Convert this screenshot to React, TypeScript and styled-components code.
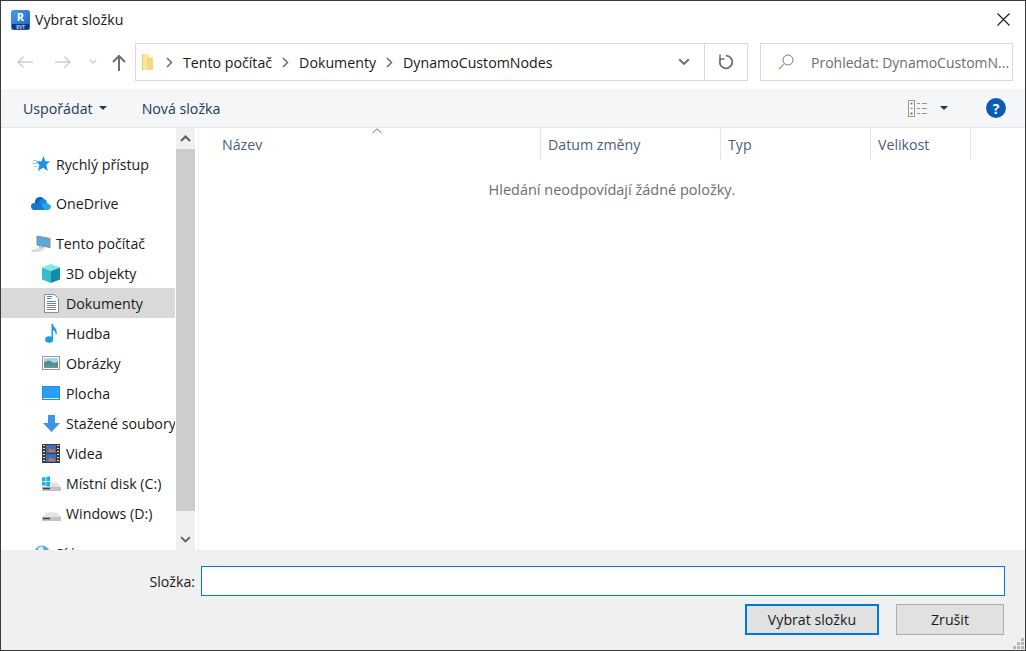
import React from 'react';
import styled, { createGlobalStyle } from 'styled-components';

const GlobalStyle = createGlobalStyle`
  html, body {
    margin: 0;
    padding: 0;
    background: #fff;
  }
  body {
    font-family: 'Open Sans', 'Noto Sans', sans-serif;
    font-size: 14.2px;
    color: #1a1a1a;
  }
  * {
    box-sizing: border-box;
  }
`;

const WindowDiv = styled.div`
  display: flex;
  flex-direction: column;
  width: 1026px;
  height: 651px;
  overflow: hidden;
  background: #fff;
  border: 1px solid #3a3a3a;
`;

const TitleBarDiv = styled.div`
  display: flex;
  align-items: center;
  flex: none;
  height: 37px;
  padding: 0 15px 0 10px;
`;

const TitleP = styled.p`
  flex: 1;
  margin: 0 0 0 5px;
`;

const NavBarDiv = styled.div`
  display: flex;
  align-items: center;
  flex: none;
  height: 51px;
  padding: 0 12px 3px 5px;
`;

const NavButton = styled.div<{ $width: number }>`
  display: flex;
  align-items: center;
  justify-content: center;
  flex: none;
  width: ${(p) => p.$width}px;
  height: 38px;
`;

const AddressDiv = styled.div`
  display: flex;
  align-items: center;
  flex: none;
  width: 613px;
  height: 38px;
  margin: 0 12px 0 1px;
  padding-left: 5px;
  border: 1px solid #d9d9d9;
`;

const CrumbsDiv = styled.div`
  display: flex;
  align-items: center;
  flex: 1;
`;

const CrumbFolderSpan = styled.span`
  display: flex;
  margin-right: 2px;
`;

const CrumbSep = styled.span`
  display: flex;
  justify-content: center;
  width: 27px;
`;

const AddressEndDiv = styled.div<{ $width: number; $divider?: boolean }>`
  display: flex;
  align-items: center;
  justify-content: center;
  flex: none;
  width: ${(p) => p.$width}px;
  height: 100%;
  border-left: ${(p) => (p.$divider ? '1px solid #d9d9d9' : 'none')};
`;

const SearchDiv = styled.div`
  display: flex;
  align-items: center;
  flex: 1;
  height: 38px;
  padding-left: 17px;
  border: 1px solid #d9d9d9;
  font-size: 14px;
  color: #6d6d6d;
  white-space: nowrap;
  overflow: hidden;
`;

const SearchTextSpan = styled.span`
  margin-left: 17px;
`;

const CommandBarDiv = styled.div`
  display: flex;
  align-items: center;
  flex: none;
  height: 39px;
  padding: 0 19px 0 22px;
  background: #f5f6f7;
  border-bottom: 1px solid #e6e6e6;
  color: #1e395b;
`;

const CommandSpan = styled.span`
  display: flex;
  align-items: center;
`;

const NewFolderSpan = styled(CommandSpan)`
  flex: 1;
  margin-left: 35px;
`;

const CaretI = styled.i`
  display: block;
  width: 0;
  height: 0;
  border-left: 4px solid transparent;
  border-right: 4px solid transparent;
  border-top: 4px solid #1e395b;
`;

const UseCaretI = styled(CaretI)`
  margin-left: 6px;
`;

const ViewCaretI = styled(CaretI)`
  margin: 0 38px 0 12px;
`;

const HelpBadge = styled.span`
  display: flex;
  align-items: center;
  justify-content: center;
  width: 20px;
  height: 20px;
  border-radius: 50%;
  background: #0a5cb0;
  color: #fff;
  font-size: 14px;
  font-weight: 700;
`;

const MainDiv = styled.div`
  display: flex;
  flex: 1;
  min-height: 0;
`;

const SidebarDiv = styled.div`
  flex: none;
  width: 174px;
  margin-right: 1px;
  overflow: hidden;
  padding-top: 21px;
`;

const NavRow = styled.div<{ $indent: number; $active?: boolean; $gap?: number }>`
  display: flex;
  align-items: center;
  height: 30px;
  margin-bottom: ${(p) => p.$gap ?? 0}px;
  padding-left: ${(p) => p.$indent}px;
  background: ${(p) => (p.$active ? '#d9d9d9' : 'transparent')};
  white-space: nowrap;
`;

const NavIconSpan = styled.span`
  display: flex;
  align-items: center;
  justify-content: center;
  flex: none;
  width: 22px;
  height: 22px;
  margin-right: 4px;
`;

const ScrollbarDiv = styled.div`
  display: flex;
  flex-direction: column;
  flex: none;
  width: 19px;
  background: #f0f0f0;
`;

const ScrollButton = styled.div`
  display: flex;
  align-items: center;
  justify-content: center;
  flex: none;
  height: 21px;
`;

const ScrollThumb = styled.div`
  flex: none;
  height: 362px;
  background: #cdcdcd;
`;

const ScrollTrack = styled.div`
  flex: 1;
`;

const ContentDiv = styled.div`
  position: relative;
  flex: 1;
  margin-left: 3px;
  border-left: 1px solid #f0f0f0;
`;

const ColumnsDiv = styled.div`
  display: flex;
  height: 32px;
`;

const ColumnDiv = styled.div<{ $width: number }>`
  display: flex;
  align-items: center;
  flex: none;
  width: ${(p) => p.$width}px;
  padding-left: 7px;
  border-right: 1px solid #e5e5e5;
  color: #4c607a;
`;

const NameColumnDiv = styled(ColumnDiv)`
  padding-left: 23px;
`;

const SortMark = styled.svg`
  position: absolute;
  top: 0;
  left: 173px;
`;

const EmptyP = styled.p`
  margin: 20px 0 0;
  text-align: center;
  font-size: 14.5px;
  color: #6d6d6d;
`;

const FooterDiv = styled.div`
  position: relative;
  display: flex;
  flex-direction: column;
  flex: none;
  height: 100px;
  padding: 16px 20px 0 0;
  background: #f0f0f0;
`;

const FolderRowDiv = styled.div`
  display: flex;
  align-items: center;
`;

const FolderLabel = styled.label`
  flex: none;
  width: 194px;
  margin-right: 6px;
  text-align: right;
`;

const FolderInput = styled.input`
  flex: 1;
  height: 30px;
  padding: 0 4px;
  background: #fff;
  border: 1px solid #0078d7;
  border-radius: 0;
  outline: none;
`;

const ButtonRowDiv = styled.div`
  display: flex;
  justify-content: flex-end;
  gap: 17px;
  margin-top: 8px;
  padding-right: 1px;
`;

const DialogButton = styled.button<{ $primary?: boolean; $width: number }>`
  width: ${(p) => p.$width}px;
  height: 31px;
  padding: 0;
  background: #e1e1e1;
  border: ${(p) => (p.$primary ? '2px solid #0078d7' : '1px solid #adadad')};
  border-radius: 0;
  font-family: inherit;
  font-size: inherit;
  color: #1a1a1a;
`;

const GripSvg = styled.svg`
  position: absolute;
  right: 1px;
  bottom: 1px;
`;

const RevitIcon = () => (
  <svg width="19" height="20" viewBox="0 0 19 20">
    <defs>
      <linearGradient id="revit" x1="0" y1="0" x2="1" y2="1">
        <stop offset="0" stopColor="#4a9bea" />
        <stop offset="1" stopColor="#1a63c4" />
      </linearGradient>
    </defs>
    <rect x="0" y="0" width="19" height="20" rx="2.5" fill="url(#revit)" />
    <path d="M1 14h17v3.500a2 2 0 0 1-2 2H3a2 2 0 0 1-2-2z" fill="#0c3a82" />
    <text x="9.500" y="11" textAnchor="middle" fontFamily="'Open Sans', sans-serif" fontSize="11" fontWeight="700" fill="#fff">
      R
    </text>
    <text x="9.500" y="19" textAnchor="middle" fontFamily="'Open Sans', sans-serif" fontSize="4.500" fontWeight="700" fill="#c6d6ef">
      RVT
    </text>
  </svg>
);

const ArrowLeft = ({ color }: { color: string }) => (
  <svg width="18" height="14" viewBox="0 0 18 14" fill="none" stroke={color} strokeWidth="1.500">
    <path d="M17 7H2M7.500 1.500 2 7l5.500 5.500" />
  </svg>
);

const ArrowRight = ({ color }: { color: string }) => (
  <svg width="18" height="14" viewBox="0 0 18 14" fill="none" stroke={color} strokeWidth="1.500">
    <path d="M1 7h15M10.500 1.500 16 7l-5.500 5.500" />
  </svg>
);

const ArrowUp = () => (
  <svg width="14" height="17" viewBox="0 0 14 17" fill="none" stroke="#6d6d6d" strokeWidth="2">
    <path d="M7 17V2M1 8l6-6 6 6" />
  </svg>
);

const ChevronDown = ({ color, size = 10 }: { color: string; size?: number }) => (
  <svg width={size} height={size * 0.7} viewBox="0 0 10 7" fill="none" stroke={color} strokeWidth="1.600">
    <path d="M1 1l4 4 4-4" />
  </svg>
);

const ChevronRight = () => (
  <svg width="7" height="11" viewBox="0 0 7 11" fill="none" stroke="#6d6d6d" strokeWidth="1.500">
    <path d="M1 1l4.500 4.500L1 10" />
  </svg>
);

const FolderIcon = () => (
  <svg width="13" height="18" viewBox="0 0 13 18">
    <path d="M1 1h5v16H1z" fill="#fbe6a6" />
    <path d="M6 1l1.500 1v2.500H12V17H6z" fill="#f8d87c" />
    <path d="M1 1h1v16H1z" fill="#ecc971" />
  </svg>
);

const RefreshIcon = () => (
  <svg width="16" height="16" viewBox="0 0 16 16" fill="none" stroke="#6d6d6d" strokeWidth="1.800">
    <path d="M8 1.700A6.300 6.300 0 1 1 2.500 4.900" />
    <path d="M2 .5v4.500h4.500" strokeWidth="1.500" />
  </svg>
);

const SearchIcon = () => (
  <svg width="16" height="16" viewBox="0 0 16 16" fill="none" stroke="#7d7d7d" strokeWidth="1">
    <circle cx="10" cy="6" r="5" />
    <path d="M6.400 9.600 1 15" stroke="#b8926a" strokeWidth="1.200" />
  </svg>
);

const CloseIcon = () => (
  <svg width="13" height="13" viewBox="0 0 13 13" fill="none" stroke="#1a1a1a" strokeWidth="1.100">
    <path d="M.5.500l12 12M12.500.500l-12 12" />
  </svg>
);

const ViewIcon = () => (
  <svg width="20" height="17" viewBox="0 0 20 17">
    <rect x="0.500" y="0.500" width="6" height="16" fill="#fff" stroke="#949494" />
    <rect x="2.500" y="2.500" width="2" height="2" fill="#7f7f7f" />
    <rect x="2.500" y="7.500" width="2" height="2" fill="#c9a63c" />
    <rect x="2.500" y="12.500" width="2" height="2" fill="#c0483a" />
    <path d="M9 3.500h3M14 3.500h5M9 8.500h3M14 8.500h5M9 13.500h3M14 13.500h5" stroke="#949494" />
  </svg>
);

const StarIcon = () => (
  <svg width="18" height="17" viewBox="0 0 18 17">
    <path d="M11.500 0l1.900 5.300 4.600.2-3.700 3.300 1.500 6.200-4.800-3.200-5 3.200 1.500-6.200L3.800 5.500l5.700-.2z" fill="#1e90e6" />
    <path d="M1 4.500h4M0 7.500h5M2 10.500h3" stroke="#9fd0f2" />
  </svg>
);

const OneDriveIcon = () => (
  <svg width="20" height="13" viewBox="0 0 20 13">
    <path d="M4 4.500a5 5 0 0 1 9-2.500l-4 5-5 .5z" fill="#0c64c0" />
    <path d="M8 5a4 4 0 0 1 5-3 4 4 0 0 1 3 3l-5 5-4-3z" fill="#1a86dc" />
    <path d="M4 13a3.500 3.500 0 0 1-1-7l5-.5 4 3 2 4.500z" fill="#1479d4" />
    <path d="M14 13h3a3 3 0 0 0 1-5.800L15 5l-5 3z" fill="#2aa6ee" />
  </svg>
);

const ComputerIcon = () => (
  <svg width="20" height="17" viewBox="0 0 20 17">
    <path d="M6 1l13 2.500v9L6 10z" fill="#5aa9da" stroke="#7d8d9b" />
    <path d="M8 11l5 1v1.500H8z" fill="#b8c2ca" />
    <path d="M0 15.500 7 13l7 1-6 3H1z" fill="#d9dde0" />
  </svg>
);

const CubeIcon = () => (
  <svg width="18" height="19" viewBox="0 0 18 19">
    <path d="M9 0l9 3.500L9 7 0 3.500z" fill="#86e6e8" />
    <path d="M0 3.500 9 7v12l-9-3.500z" fill="#35bccd" />
    <path d="M18 3.500 9 7v12l9-3.500z" fill="#0f8ca6" />
  </svg>
);

const DocumentIcon = () => (
  <svg width="15" height="19" viewBox="0 0 15 19">
    <path d="M.5.500h10l4 4v14H.5z" fill="#fdfdfd" stroke="#8f8f8f" />
    <path d="M3 2.500h5M3 4.500h4" stroke="#2d8fd8" />
    <path d="M3 7.500h9M3 9.500h9M3 11.500h9M3 13.500h9M3 15.500h9" stroke="#76818c" />
  </svg>
);

const MusicIcon = () => (
  <svg width="12" height="19" viewBox="0 0 12 19">
    <ellipse cx="4.200" cy="15.500" rx="4" ry="3.200" fill="#1b9bea" />
    <path d="M6.500 15V0h1.500c.4 3 3.800 4 3.800 8.500 0 1.400-.4 2.400-1 3.300.2-3-1-5-2.800-6V15z" fill="#1b9bea" />
  </svg>
);

const PictureIcon = () => (
  <svg width="18" height="14" viewBox="0 0 18 14">
    <rect x=".5" y=".5" width="17" height="13" fill="#fff" stroke="#9a9a9a" />
    <rect x="2" y="2" width="14" height="5" fill="#a8d3ea" />
    <path d="M2 6l5-1.500L12 7l4-1v6H2z" fill="#4f8f86" />
    <rect x="2" y="9.500" width="14" height="2.500" fill="#6d8fa8" />
  </svg>
);

const DesktopIcon = () => (
  <svg width="18" height="14" viewBox="0 0 18 14">
    <rect x="0" y="0" width="18" height="14" fill="#1d8fe6" />
    <rect x="1" y="1" width="16" height="11" fill="#2a9ff0" />
    <rect x="1" y="12" width="16" height="1" fill="#d4ecfb" />
  </svg>
);

const DownloadIcon = () => (
  <svg width="17" height="17" viewBox="0 0 17 17">
    <path d="M5 0h7v8h5l-8.500 9L0 8h5z" fill="#3f93e2" />
  </svg>
);

const VideoIcon = () => (
  <svg width="18" height="19" viewBox="0 0 18 19">
    <rect width="18" height="19" fill="#3d3d3d" />
    <path d="M1 1.500h2M1 4.500h2M1 7.500h2M1 10.500h2M1 13.500h2M1 16.500h2M15 1.500h2M15 4.500h2M15 7.500h2M15 10.500h2M15 13.500h2M15 16.500h2" stroke="#d9d9d9" />
    <rect x="4" y="1" width="10" height="8" fill="#3a6fc4" />
    <rect x="4" y="10" width="10" height="8" fill="#3a6fc4" />
    <path d="M6 8l2-4 2 2 2-1 1 3zM6 17l2-4 2 2 2-1 1 3z" fill="#d8762c" />
  </svg>
);

const DiskShape = () => (
  <>
    <path d="M0 13 5 8.500h10l4 4.500z" fill="#e2e2e2" />
    <path d="M0 13h19v4H0z" fill="#c2c2c2" />
    <path d="M1 14.500h7" stroke="#3d3d3d" strokeWidth="1.500" />
  </>
);

const LocalDiskIcon = () => (
  <svg width="19" height="18" viewBox="0 0 19 18">
    <DiskShape />
    <path d="M0 3.500l3.500-.5v4H0zM4.300 2.900 8 2.300V7H4.300zM0 7.800h3.500v4l-3.500-.5zM4.300 7.800H8v4.700l-3.700-.6z" fill="#10b4f0" />
  </svg>
);

const DiskIcon = () => (
  <svg width="19" height="18" viewBox="0 0 19 18">
    <DiskShape />
  </svg>
);

const GlobeIcon = () => (
  <svg width="18" height="18" viewBox="0 0 18 18">
    <circle cx="10" cy="9" r="7.500" fill="#5da9d8" />
    <path d="M6 4l4-2 2 3-3 3-3-1z" fill="#d7ecf6" />
    <path d="M0 11h3v2H0z" fill="#9aa7b0" />
  </svg>
);

const sidebarRows = [
  { label: 'Rychlý přístup', icon: <StarIcon />, indent: 29, gap: 9 },
  { label: 'OneDrive', icon: <OneDriveIcon />, indent: 29, gap: 10 },
  { label: 'Tento počítač', icon: <ComputerIcon />, indent: 29 },
  { label: '3D objekty', icon: <CubeIcon />, indent: 39 },
  { label: 'Dokumenty', icon: <DocumentIcon />, indent: 39, active: true },
  { label: 'Hudba', icon: <MusicIcon />, indent: 39 },
  { label: 'Obrázky', icon: <PictureIcon />, indent: 39 },
  { label: 'Plocha', icon: <DesktopIcon />, indent: 39 },
  { label: 'Stažené soubory', icon: <DownloadIcon />, indent: 39 },
  { label: 'Videa', icon: <VideoIcon />, indent: 39 },
  { label: 'Místní disk (C:)', icon: <LocalDiskIcon />, indent: 39 },
  { label: 'Windows (D:)', icon: <DiskIcon />, indent: 39, gap: 10 },
  { label: 'Síť', icon: <GlobeIcon />, indent: 29 },
];

export default function App() {
  return (
    <WindowDiv>
      <GlobalStyle />

      <TitleBarDiv>
        <RevitIcon />
        <TitleP>Vybrat složku</TitleP>
        <CloseIcon />
      </TitleBarDiv>

      <NavBarDiv>
        <NavButton $width={38}>
          <ArrowLeft color="#d0d0d0" />
        </NavButton>
        <NavButton $width={38}>
          <ArrowRight color="#d0d0d0" />
        </NavButton>
        <NavButton $width={22}>
          <ChevronDown color="#d0d0d0" size={8} />
        </NavButton>
        <NavButton $width={30}>
          <ArrowUp />
        </NavButton>

        <AddressDiv>
          <CrumbsDiv>
            <CrumbFolderSpan>
              <FolderIcon />
            </CrumbFolderSpan>
            <CrumbSep>
              <ChevronRight />
            </CrumbSep>
            <span>Tento počítač</span>
            <CrumbSep>
              <ChevronRight />
            </CrumbSep>
            <span>Dokumenty</span>
            <CrumbSep>
              <ChevronRight />
            </CrumbSep>
            <span>DynamoCustomNodes</span>
          </CrumbsDiv>
          <AddressEndDiv $width={40}>
            <ChevronDown color="#6d6d6d" size={12} />
          </AddressEndDiv>
          <AddressEndDiv $width={43} $divider>
            <RefreshIcon />
          </AddressEndDiv>
        </AddressDiv>

        <SearchDiv>
          <SearchIcon />
          <SearchTextSpan>Prohledat: DynamoCustomN...</SearchTextSpan>
        </SearchDiv>
      </NavBarDiv>

      <CommandBarDiv>
        <CommandSpan>
          Uspořádat
          <UseCaretI />
        </CommandSpan>
        <NewFolderSpan>Nová složka</NewFolderSpan>
        <ViewIcon />
        <ViewCaretI />
        <HelpBadge>?</HelpBadge>
      </CommandBarDiv>

      <MainDiv>
        <SidebarDiv>
          {sidebarRows.map((row) => (
            <NavRow key={row.label} $indent={row.indent} $active={row.active} $gap={row.gap}>
              <NavIconSpan>{row.icon}</NavIconSpan>
              {row.label}
            </NavRow>
          ))}
        </SidebarDiv>

        <ScrollbarDiv>
          <ScrollButton>
            <svg width="11" height="7" viewBox="0 0 11 7" fill="none" stroke="#5f5f5f" strokeWidth="2">
              <path d="M1 6l4.500-4.500L10 6" />
            </svg>
          </ScrollButton>
          <ScrollThumb />
          <ScrollTrack />
          <ScrollButton>
            <ChevronDown color="#5f5f5f" size={11} />
          </ScrollButton>
        </ScrollbarDiv>

        <ContentDiv>
          <SortMark width="10" height="6" viewBox="0 0 10 6" fill="none" stroke="#6d6d6d">
            <path d="M.5 5 5 .8 9.500 5" />
          </SortMark>
          <ColumnsDiv>
            <NameColumnDiv $width={342}>Název</NameColumnDiv>
            <ColumnDiv $width={180}>Datum změny</ColumnDiv>
            <ColumnDiv $width={150}>Typ</ColumnDiv>
            <ColumnDiv $width={100}>Velikost</ColumnDiv>
          </ColumnsDiv>
          <EmptyP>Hledání neodpovídají žádné položky.</EmptyP>
        </ContentDiv>
      </MainDiv>

      <FooterDiv>
        <FolderRowDiv>
          <FolderLabel htmlFor="folder">Složka:</FolderLabel>
          <FolderInput id="folder" />
        </FolderRowDiv>
        <ButtonRowDiv>
          <DialogButton $primary $width={134}>
            Vybrat složku
          </DialogButton>
          <DialogButton $width={108}>Zrušit</DialogButton>
        </ButtonRowDiv>
        <GripSvg width="11" height="11" viewBox="0 0 11 11" fill="#b5b5b5">
          <path d="M8 0h3v3H8zM4 4h3v3H4zM8 4h3v3H8zM0 8h3v3H0zM4 8h3v3H4zM8 8h3v3H8z" />
        </GripSvg>
      </FooterDiv>
    </WindowDiv>
  );
}
